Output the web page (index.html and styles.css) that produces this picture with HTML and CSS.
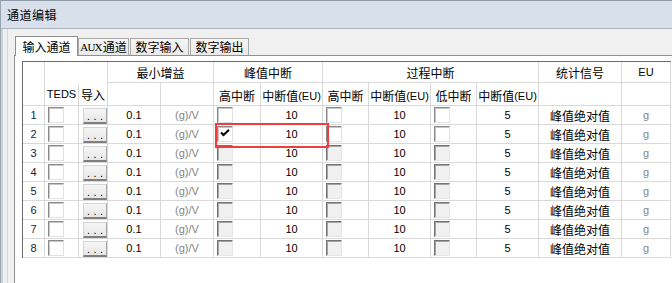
FILE: index.html
```html
<!DOCTYPE html>
<html lang="zh-CN">
  <head>
    <meta charset="UTF-8" />
    <title>通道编辑</title>
    <link rel="stylesheet" href="styles.css">
  </head>
  <body>
    <div class="window">
      <div class="titlebar">通道编辑</div>
      <div class="frame">
        <div class="client">
          <div class="tabs">
            <div class="tab active">输入通道</div>
            <div class="tab aux"><span class="aux-latin">AUX</span>通道</div>
            <div class="tab">数字输入</div>
            <div class="tab">数字输出</div>
          </div>
          <div class="panel">
            <div class="grid">
              <!-- header -->
              <div class="corner"></div>
              <div class="span2 open"></div>
              <div class="span2 zh">最小增益</div>
              <div class="span2 zh">峰值中断</div>
              <div class="span4 zh">过程中断</div>
              <div class="zh">统计信号</div>
              <div>EU</div>

              <div>TEDS</div>
              <div class="zh">导入</div>
              <div></div>
              <div></div>
              <div class="zh sub">高中断</div>
              <div class="zh sub">中断值<span class="lat">(EU)</span></div>
              <div class="zh sub">高中断</div>
              <div class="zh sub">中断值<span class="lat">(EU)</span></div>
              <div class="zh sub">低中断</div>
              <div class="zh sub">中断值<span class="lat">(EU)</span></div>
              <div></div>
              <div></div>

              <!-- row 1 -->
              <div class="rh">1</div>
              <div class="chk-cell"><span class="chk"></span></div>
              <div class="btn-cell"><span class="btn">...</span></div>
              <div>0.1</div>
              <div class="gray">(g)/V</div>
              <div class="chk-cell"><span class="chk"></span></div>
              <div>10</div>
              <div class="chk-cell"><span class="chk"></span></div>
              <div>10</div>
              <div class="chk-cell"><span class="chk"></span></div>
              <div>5</div>
              <div class="zh">峰值绝对值</div>
              <div class="gray">g</div>

              <!-- row 2 -->
              <div class="rh">2</div>
              <div class="chk-cell"><span class="chk"></span></div>
              <div class="btn-cell"><span class="btn">...</span></div>
              <div>0.1</div>
              <div class="gray">(g)/V</div>
              <div class="chk-cell mark">
                <span class="chk">
                  <svg width="14" height="14" viewBox="0 0 14 14"><path d="M3 5.5L5.5 8L11 2.8" fill="none" stroke="#000" stroke-width="2"/></svg>
                </span>
              </div>
              <div>10</div>
              <div class="chk-cell"><span class="chk"></span></div>
              <div>10</div>
              <div class="chk-cell"><span class="chk"></span></div>
              <div>5</div>
              <div class="zh">峰值绝对值</div>
              <div class="gray">g</div>

              <!-- row 3 -->
              <div class="rh">3</div>
              <div class="chk-cell"><span class="chk"></span></div>
              <div class="btn-cell"><span class="btn">...</span></div>
              <div>0.1</div>
              <div class="gray">(g)/V</div>
              <div class="chk-cell"><span class="chk off"></span></div>
              <div>10</div>
              <div class="chk-cell"><span class="chk off"></span></div>
              <div>10</div>
              <div class="chk-cell"><span class="chk off"></span></div>
              <div>5</div>
              <div class="zh">峰值绝对值</div>
              <div class="gray">g</div>

              <!-- row 4 -->
              <div class="rh">4</div>
              <div class="chk-cell"><span class="chk"></span></div>
              <div class="btn-cell"><span class="btn">...</span></div>
              <div>0.1</div>
              <div class="gray">(g)/V</div>
              <div class="chk-cell"><span class="chk off"></span></div>
              <div>10</div>
              <div class="chk-cell"><span class="chk off"></span></div>
              <div>10</div>
              <div class="chk-cell"><span class="chk off"></span></div>
              <div>5</div>
              <div class="zh">峰值绝对值</div>
              <div class="gray">g</div>

              <!-- row 5 -->
              <div class="rh">5</div>
              <div class="chk-cell"><span class="chk"></span></div>
              <div class="btn-cell"><span class="btn">...</span></div>
              <div>0.1</div>
              <div class="gray">(g)/V</div>
              <div class="chk-cell"><span class="chk off"></span></div>
              <div>10</div>
              <div class="chk-cell"><span class="chk off"></span></div>
              <div>10</div>
              <div class="chk-cell"><span class="chk off"></span></div>
              <div>5</div>
              <div class="zh">峰值绝对值</div>
              <div class="gray">g</div>

              <!-- row 6 -->
              <div class="rh">6</div>
              <div class="chk-cell"><span class="chk"></span></div>
              <div class="btn-cell"><span class="btn">...</span></div>
              <div>0.1</div>
              <div class="gray">(g)/V</div>
              <div class="chk-cell"><span class="chk off"></span></div>
              <div>10</div>
              <div class="chk-cell"><span class="chk off"></span></div>
              <div>10</div>
              <div class="chk-cell"><span class="chk off"></span></div>
              <div>5</div>
              <div class="zh">峰值绝对值</div>
              <div class="gray">g</div>

              <!-- row 7 -->
              <div class="rh">7</div>
              <div class="chk-cell"><span class="chk"></span></div>
              <div class="btn-cell"><span class="btn">...</span></div>
              <div>0.1</div>
              <div class="gray">(g)/V</div>
              <div class="chk-cell"><span class="chk off"></span></div>
              <div>10</div>
              <div class="chk-cell"><span class="chk off"></span></div>
              <div>10</div>
              <div class="chk-cell"><span class="chk off"></span></div>
              <div>5</div>
              <div class="zh">峰值绝对值</div>
              <div class="gray">g</div>

              <!-- row 8 -->
              <div class="rh">8</div>
              <div class="chk-cell"><span class="chk"></span></div>
              <div class="btn-cell"><span class="btn">...</span></div>
              <div>0.1</div>
              <div class="gray">(g)/V</div>
              <div class="chk-cell"><span class="chk off"></span></div>
              <div>10</div>
              <div class="chk-cell"><span class="chk off"></span></div>
              <div>10</div>
              <div class="chk-cell"><span class="chk off"></span></div>
              <div>5</div>
              <div class="zh">峰值绝对值</div>
              <div class="gray">g</div>
            </div>
          </div>
        </div>
      </div>
    </div>
  </body>
</html>
```

FILE: styles.css
```css
* {
  margin: 0;
  padding: 0;
  box-sizing: border-box;
}
body {
  width: 672px;
  height: 283px;
  overflow: hidden;
  background: #f0f0f0;
  font-family: "Liberation Sans", "Noto Sans CJK SC", sans-serif;
  font-size: 11px;
  color: #000;
}
.window {
  height: 283px;
  border-left: 1px solid #9aa5b2;
  display: flex;
  flex-direction: column;
}
.titlebar {
  flex: none;
  height: 29px;
  padding-left: 6px;
  background: #d7e0eb;
  border-top: 1px solid #8d98a5;
  border-bottom: 1px solid #aab3be;
  display: flex;
  align-items: center;
  font-family: "Noto Sans CJK SC", sans-serif;
  font-size: 12px;
  letter-spacing: 0.5px;
}
.frame {
  flex: 1;
  display: flex;
  padding-left: 6px;
  background: linear-gradient(to right, #c9d2dd 2px, #f0f0f0 2px);
}
.client {
  flex: 1;
  min-width: 0;
  display: flex;
  flex-direction: column;
  padding-top: 7px;
  border-left: 1px solid #d4d4d4;
  background: #f0f0f0;
}
.tabs {
  flex: none;
  height: 19px;
  padding-left: 7px;
  display: flex;
  align-items: flex-end;
}
.tab {
  width: 59px;
  height: 17px;
  margin-left: 1px;
  border: 1px solid #a9a9a9;
  border-bottom: none;
  background: linear-gradient(#f6f6f6, #e9e9e9);
  display: flex;
  align-items: center;
  justify-content: center;
  font-family: "Noto Sans CJK SC", sans-serif;
  font-size: 12px;
  line-height: 1;
}
.tab.active {
  width: 63px;
  height: 20px;
  margin-left: 0;
  margin-bottom: -1px;
  background: #fff;
  border-color: #8e8f8f;
  position: relative;
  z-index: 1;
}
.tab.aux {
  width: 51px;
  margin-left: 0;
}
.aux-latin {
  font-family: "Liberation Serif", serif;
  font-size: 11px;
  letter-spacing: -0.8px;
  margin-right: 1px;
}
.panel {
  flex: 1;
  margin-left: 6px;
  padding: 5px 0 0 7px;
  background: #fff;
  border-top: 1px solid #8e8f8f;
  border-left: 1px solid #8e8f8f;
}
.grid {
  display: grid;
  grid-template-columns: 22px 34px 29px 53px 53px 47px 62px 46px 62px 46px 62px 83px 49px;
  grid-template-rows: 21px 23px repeat(8, 19px);
  width: max-content;
  border-left: 1px solid #6b6b6b;
  border-top: 1px solid #6b6b6b;
}
.grid > div {
  border-right: 1px solid #d9d9d9;
  border-bottom: 1px solid #d9d9d9;
  display: flex;
  align-items: center;
  justify-content: center;
  white-space: nowrap;
}
.grid > .open {
  border-bottom: none;
}
.corner {
  grid-row: span 2;
}
.span2 {
  grid-column: span 2;
}
.span4 {
  grid-column: span 4;
}
.zh {
  font-size: 12px;
}
.sub {
  padding-top: 3px;
}
.lat {
  font-size: 11px;
}
.rh {
  color: #1e1b3a;
}
.gray {
  color: #858585;
}
.grid > .chk-cell {
  justify-content: flex-start;
  align-items: flex-start;
  padding: 1px 0 0 3px;
}
.grid > .btn-cell {
  justify-content: flex-start;
  align-items: flex-start;
  padding: 2px 0 0 4px;
}
.chk {
  display: block;
  width: 16px;
  height: 16px;
  background: #fff;
  border: 1px solid;
  border-color: #8a8a8a #e2e2e2 #e2e2e2 #8a8a8a;
  box-shadow: inset 1px 1px 0 #c6c6c6;
}
.chk svg {
  display: block;
}
.chk.off {
  background: #f0f0f0;
  border-color: #727272 #e6e6e6 #e6e6e6 #727272;
  box-shadow: inset 1px 1px 0 #a5a5a5;
}
.btn {
  display: flex;
  align-items: flex-end;
  width: 24px;
  height: 16px;
  padding-left: 3px;
  background: linear-gradient(#f5f5f5, #e7e7e7);
  border: 1px solid #d4d4d4;
  border-right-color: #a8a8a8;
  border-bottom: 2px solid #7f7f7f;
  font-size: 11px;
  line-height: 11px;
  letter-spacing: 3.5px;
}
.mark {
  position: relative;
}
.mark::after {
  content: "";
  position: absolute;
  left: 1px;
  top: -2px;
  width: 110px;
  height: 21px;
  border: 2px solid #f03c3c;
  z-index: 2;
}
```
